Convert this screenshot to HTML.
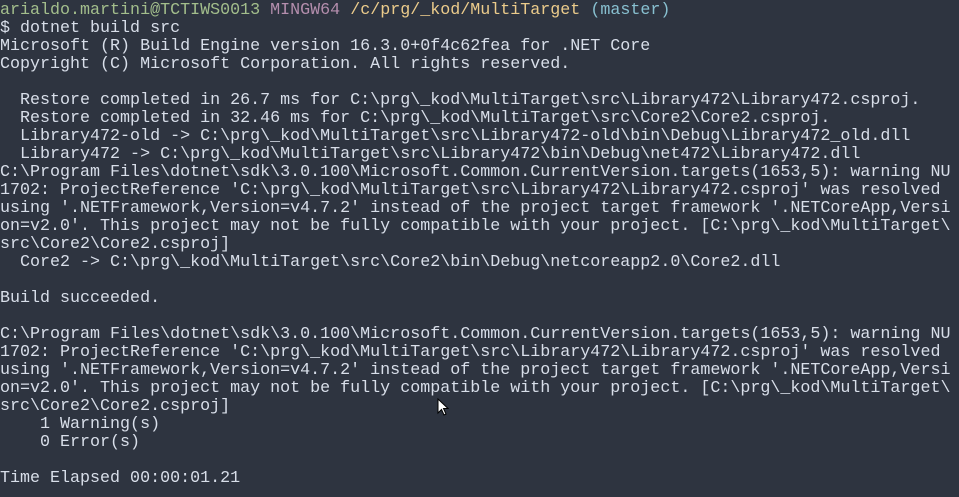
<!DOCTYPE html>
<html><head><style>
html,body{margin:0;padding:0;background:#2e3440;width:959px;height:497px;overflow:hidden}
pre{margin:0;padding:2px 0 0 0;font-family:"Liberation Mono","DejaVu Sans Mono",monospace;font-size:16.68px;line-height:18px;color:#d8dee9;white-space:pre}
.g{color:#a3be8c}.p{color:#b48ead}.y{color:#ebcb8b}.b{color:#88c0d0}
.cur{position:absolute;left:437px;top:398px}
</style></head><body>
<pre><span class="g">arialdo.martini@TCTIWS0013</span> <span class="p">MINGW64</span> <span class="y">/c/prg/_kod/MultiTarget</span> <span class="b">(master)</span>
$ dotnet build src
Microsoft (R) Build Engine version 16.3.0+0f4c62fea for .NET Core
Copyright (C) Microsoft Corporation. All rights reserved.

  Restore completed in 26.7 ms for C:\prg\_kod\MultiTarget\src\Library472\Library472.csproj.
  Restore completed in 32.46 ms for C:\prg\_kod\MultiTarget\src\Core2\Core2.csproj.
  Library472-old -&gt; C:\prg\_kod\MultiTarget\src\Library472-old\bin\Debug\Library472_old.dll
  Library472 -&gt; C:\prg\_kod\MultiTarget\src\Library472\bin\Debug\net472\Library472.dll
C:\Program Files\dotnet\sdk\3.0.100\Microsoft.Common.CurrentVersion.targets(1653,5): warning NU
1702: ProjectReference 'C:\prg\_kod\MultiTarget\src\Library472\Library472.csproj' was resolved
using '.NETFramework,Version=v4.7.2' instead of the project target framework '.NETCoreApp,Versi
on=v2.0'. This project may not be fully compatible with your project. [C:\prg\_kod\MultiTarget\
src\Core2\Core2.csproj]
  Core2 -&gt; C:\prg\_kod\MultiTarget\src\Core2\bin\Debug\netcoreapp2.0\Core2.dll

Build succeeded.

C:\Program Files\dotnet\sdk\3.0.100\Microsoft.Common.CurrentVersion.targets(1653,5): warning NU
1702: ProjectReference 'C:\prg\_kod\MultiTarget\src\Library472\Library472.csproj' was resolved
using '.NETFramework,Version=v4.7.2' instead of the project target framework '.NETCoreApp,Versi
on=v2.0'. This project may not be fully compatible with your project. [C:\prg\_kod\MultiTarget\
src\Core2\Core2.csproj]
    1 Warning(s)
    0 Error(s)

Time Elapsed 00:00:01.21</pre>
<svg class="cur" width="12" height="18" viewBox="0 0 12 18"><path d="M1 1 L1 15 L4.5 11.5 L7 17 L9 16 L6.5 10.5 L11 10.5 Z" fill="#fff" stroke="#000" stroke-width="1"/></svg>
</body></html>
